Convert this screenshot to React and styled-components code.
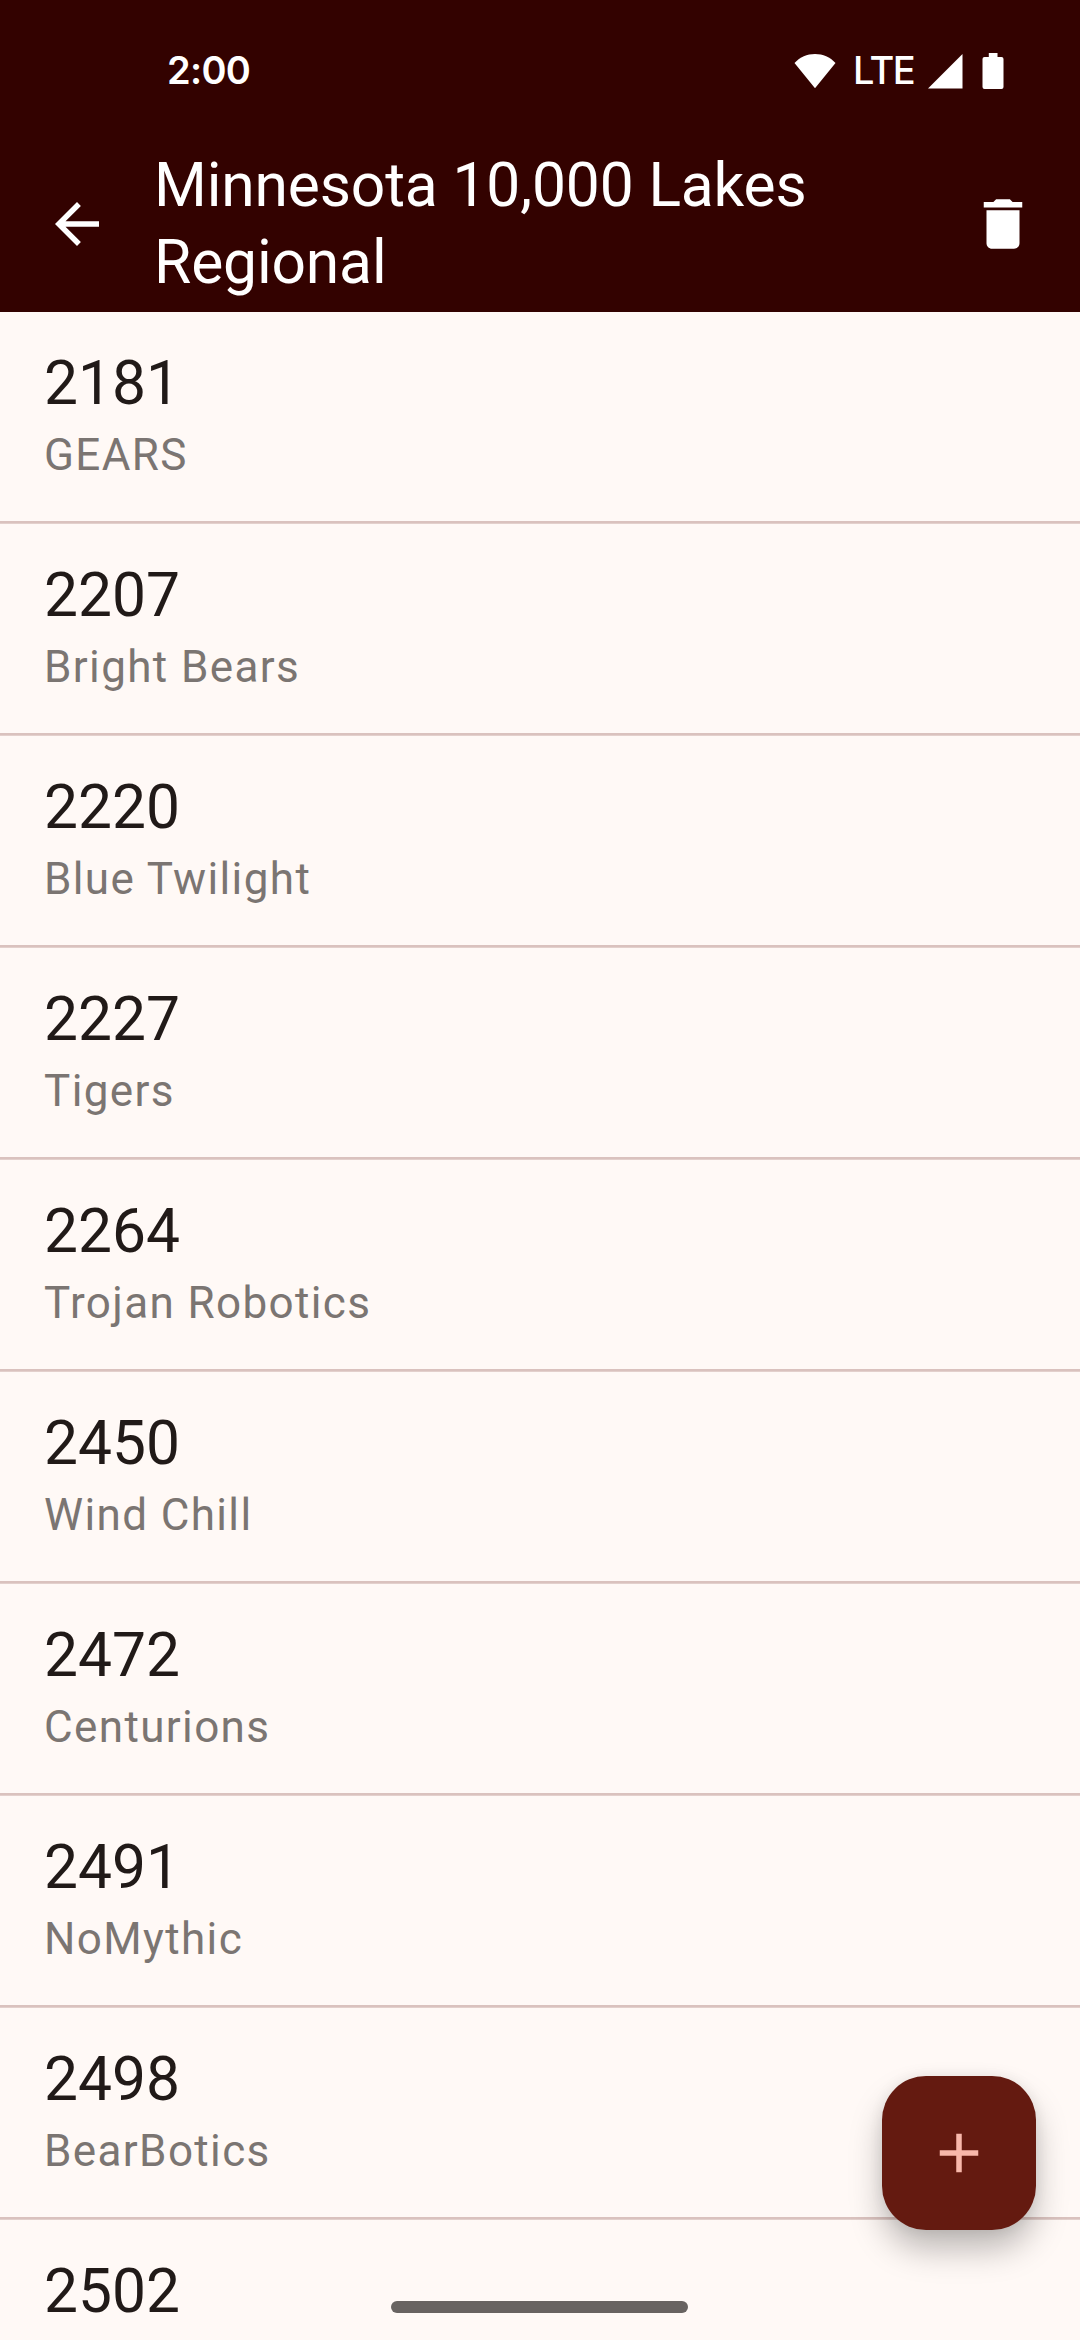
import React from "react";
import styled, { createGlobalStyle } from "styled-components";

const GlobalStyle = createGlobalStyle`
  * { box-sizing: border-box; }
  body {
    margin: 0;
    background: #fff9f6;
    font-family: Roboto, "Liberation Sans", sans-serif;
  }
`;

const Screen = styled.div`
  position: relative;
  width: 1080px;
  height: 2340px;
  overflow: hidden;
  display: flex;
  flex-direction: column;
  background: #fff9f6;
`;

const Header = styled.header`
  flex: none;
  background: #330200;
  color: #fff;
`;

const StatusBar = styled.div`
  height: 136px;
  padding: 5px 76px 0 167px;
  display: flex;
  align-items: center;
  justify-content: space-between;
  font-family: Inter, sans-serif;
  font-weight: 500;
  font-size: 38px;
  line-height: 46px;
`;

const StatusIcons = styled.div`
  display: flex;
  align-items: center;
`;

const Network = styled.span`
  width: 92px;
  padding: 0 0 2px 17px;
  letter-spacing: -1.5px;
`;

const Clock = styled.span`
  padding-bottom: 2px;
  font-weight: 600;
  letter-spacing: -0.7px;
`;

const Glyph = styled.svg`
  display: block;
  flex: none;
  fill: currentColor;
  margin-left: ${(p) => p.$gap || 0}px;
`;

const Toolbar = styled.div`
  height: 176px;
  padding: 0 44px;
  display: flex;
  align-items: center;
`;

const IconButton = styled.button`
  flex: none;
  display: flex;
  padding: 0;
  border: 0;
  background: none;
  color: inherit;
`;

const Title = styled.h1`
  flex: 1;
  margin: 0 44px;
  font-size: 60.5px;
  line-height: 77px;
  font-weight: 400;
  letter-spacing: -0.14px;
`;

const List = styled.ul`
  list-style: none;
  margin: 0;
  padding: 0;
`;

const Team = styled.li`
  height: 212px;
  padding: 33px 44px 0;
  border-bottom: 1px solid #e3d0cc;
  box-shadow: inset 0 -2px #dac2be;
`;

const TeamNumber = styled.div`
  font-size: 60.5px;
  line-height: 77px;
  color: #211a18;
`;

const TeamName = styled.div`
  font-size: 44px;
  line-height: 66px;
  letter-spacing: 1.375px;
  color: #7b7572;
`;

const AddButton = styled.button`
  position: absolute;
  right: 44px;
  bottom: 110px;
  width: 154px;
  height: 154px;
  padding: 0;
  border: 0;
  border-radius: 44px;
  display: flex;
  align-items: center;
  justify-content: center;
  background: #641a10;
  color: #f8b8ab;
  box-shadow: 0 20px 34px -2px rgba(0, 0, 0, 0.28), 0 0 14px rgba(0, 0, 0, 0.07);
`;

const HomeIndicator = styled.div`
  position: absolute;
  left: 391px;
  bottom: 27px;
  width: 297px;
  height: 12px;
  border-radius: 6px;
  background: #686361;
`;

const teams = [
  ["2181", "GEARS"],
  ["2207", "Bright Bears"],
  ["2220", "Blue Twilight"],
  ["2227", "Tigers"],
  ["2264", "Trojan Robotics"],
  ["2450", "Wind Chill"],
  ["2472", "Centurions"],
  ["2491", "NoMythic"],
  ["2498", "BearBotics"],
  ["2502", ""],
];

export default function App() {
  return (
    <Screen>
      <GlobalStyle />
      <Header>
        <StatusBar>
          <Clock>2:00</Clock>
          <StatusIcons>
            <Glyph width="42" height="36" viewBox="0 0 42 36">
              <path d="M21 35.3 0.5 10C6 4 13 1 21 1s15 3 20.500 9z" />
            </Glyph>
            <Network>LTE</Network>
            <Glyph width="35" height="36" viewBox="0 0 35 36">
              <path d="M34.500 1v34.500H0z" />
            </Glyph>
            <Glyph $gap={19} width="22" height="38" viewBox="0 0 22 38">
              <path d="M6.800 1h8.700v4H19.500a2 2 0 0 1 2 2v28a2 2 0 0 1-2 2h-17a2 2 0 0 1-2-2V7a2 2 0 0 1 2-2h4.300z" />
            </Glyph>
          </StatusIcons>
        </StatusBar>
        <Toolbar>
          <IconButton aria-label="Back">
            <Glyph width="66" height="66" viewBox="0 0 24 24">
              <path d="M20 11H7.830l5.590-5.590L12 4l-8 8 8 8 1.410-1.410L7.830 13H20z" />
            </Glyph>
          </IconButton>
          <Title>Minnesota 10,000 Lakes Regional</Title>
          <IconButton aria-label="Delete">
            <Glyph width="66" height="66" viewBox="0 0 24 24">
              <path d="M6 19c0 1.100.900 2 2 2h8c1.100 0 2-.900 2-2V7H6zM19 4h-3.500l-1-1h-5l-1 1H5v2h14z" />
            </Glyph>
          </IconButton>
        </Toolbar>
      </Header>
      <List>
        {teams.map(([number, name]) => (
          <Team key={number}>
            <TeamNumber>{number}</TeamNumber>
            {name && <TeamName>{name}</TeamName>}
          </Team>
        ))}
      </List>
      <AddButton aria-label="Add team">
        <Glyph width="66" height="66" viewBox="0 0 24 24">
          <path d="M19 13h-6v6h-2v-6H5v-2h6V5h2v6h6z" />
        </Glyph>
      </AddButton>
      <HomeIndicator />
    </Screen>
  );
}
